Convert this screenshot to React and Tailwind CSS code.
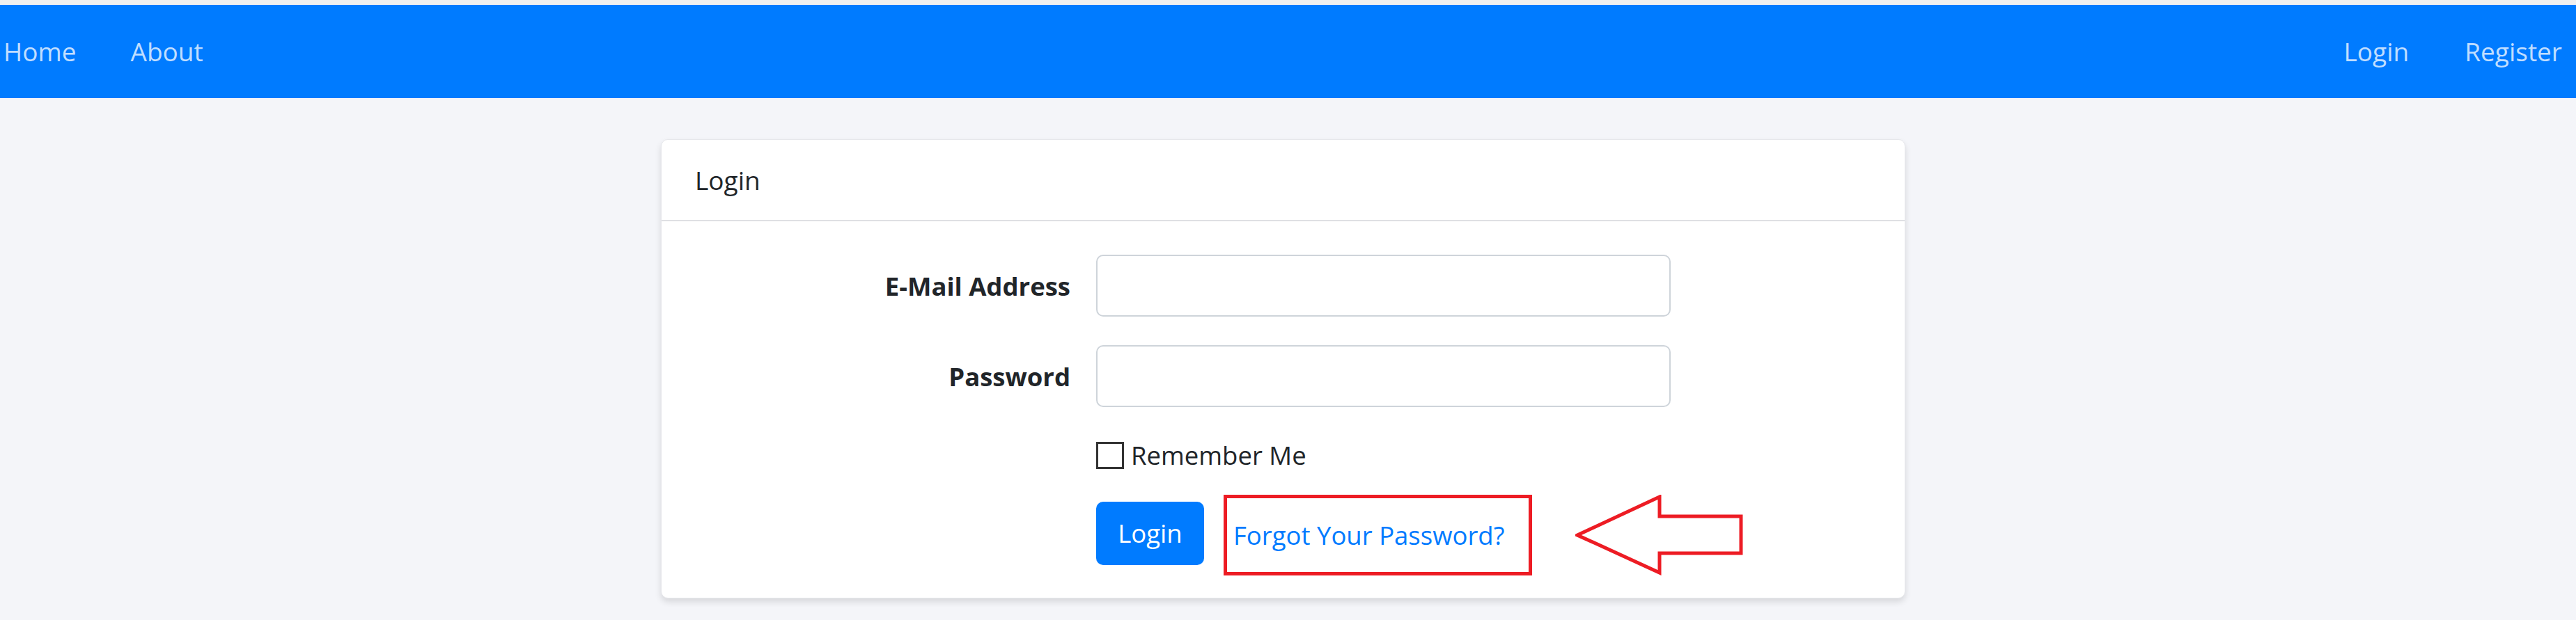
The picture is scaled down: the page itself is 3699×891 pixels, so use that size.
const font = { fontFamily: '"Open Sans", "Noto Sans", Arial, sans-serif' };

const NavLink = ({ children }) => (
  <a href="#" className="text-[37px] leading-[58px] text-[#c0deff]">
    {children}
  </a>
);

const Field = ({ label, type }) => (
  <div className="flex items-center">
    <label className="w-[539px] shrink-0 text-right text-[36.5px] font-bold leading-[58px] text-[#212529]">
      {label}
    </label>
    <input
      type={type}
      className="ml-[37px] h-[89px] w-[825px] rounded-[10px] border-2 border-[#ced4da] bg-white"
    />
  </div>
);

const App = () => {
  return (
    <div className="min-h-[891px] bg-[#f4f5f9]" style={font}>
      <div className="h-[7px] bg-[#f0f0f0]" />
      <nav className="flex h-[134px] items-center justify-between bg-[#007bff] pl-[5px] pr-[20px]">
        <div className="flex gap-[78px]">
          <NavLink>Home</NavLink>
          <NavLink>About</NavLink>
        </div>
        <div className="flex gap-[80px]">
          <NavLink>Login</NavLink>
          <NavLink>Register</NavLink>
        </div>
      </nav>

      <main className="flex justify-center pr-[14px] pt-[59px]">
        <div className="w-[1787px] rounded-[10px] border border-[#e6e7eb] bg-white shadow-[0_5px_10px_rgba(0,0,0,0.12)]">
          <div className="h-[117px] border-b-2 border-[#dfe0e3] px-[48px] pt-[29px] text-[37px] leading-[58px] text-[#212529]">
            Login
          </div>
          <div className="px-[48px] pb-[47px] pt-[48px]">
            <div className="flex flex-col gap-[41px]">
              <Field label="E-Mail Address" type="email" />
              <Field label="Password" type="password" />
            </div>

            <div className="ml-[576px] mt-[40px] flex h-[58px] items-center gap-[10px]">
              <span className="h-[39px] w-[40px] border-[3px] border-[#333333] bg-white" />
              <span className="text-[36.5px] leading-[58px] text-[#212529]">Remember Me</span>
            </div>

            <div className="ml-[576px] mt-[38px] flex h-[91px] items-start">
              <button className="h-[91px] w-[155px] rounded-[10px] bg-[#007bff] text-[36.5px] text-white">
                Login
              </button>
              <a
                href="#"
                className="-mt-[10px] ml-[28px] flex h-[116px] w-[443px] shrink-0 items-center border-[5px] border-[#ed1c24] pl-[9px] text-[36.5px] leading-[58px] text-[#007bff]"
              >
                Forgot Your Password?
              </a>
              <svg width="242" height="116" viewBox="0 0 242 116" className="-mt-[10px] ml-[62px] shrink-0">
                <polygon
                  points="3,58 121,3 121,31 238,31 238,84 121,84 121,112"
                  fill="#ffffff"
                  stroke="#ed1c24"
                  strokeWidth="5"
                  strokeLinejoin="miter"
                />
              </svg>
            </div>
          </div>
        </div>
      </main>
    </div>
  );
};

export default App;
